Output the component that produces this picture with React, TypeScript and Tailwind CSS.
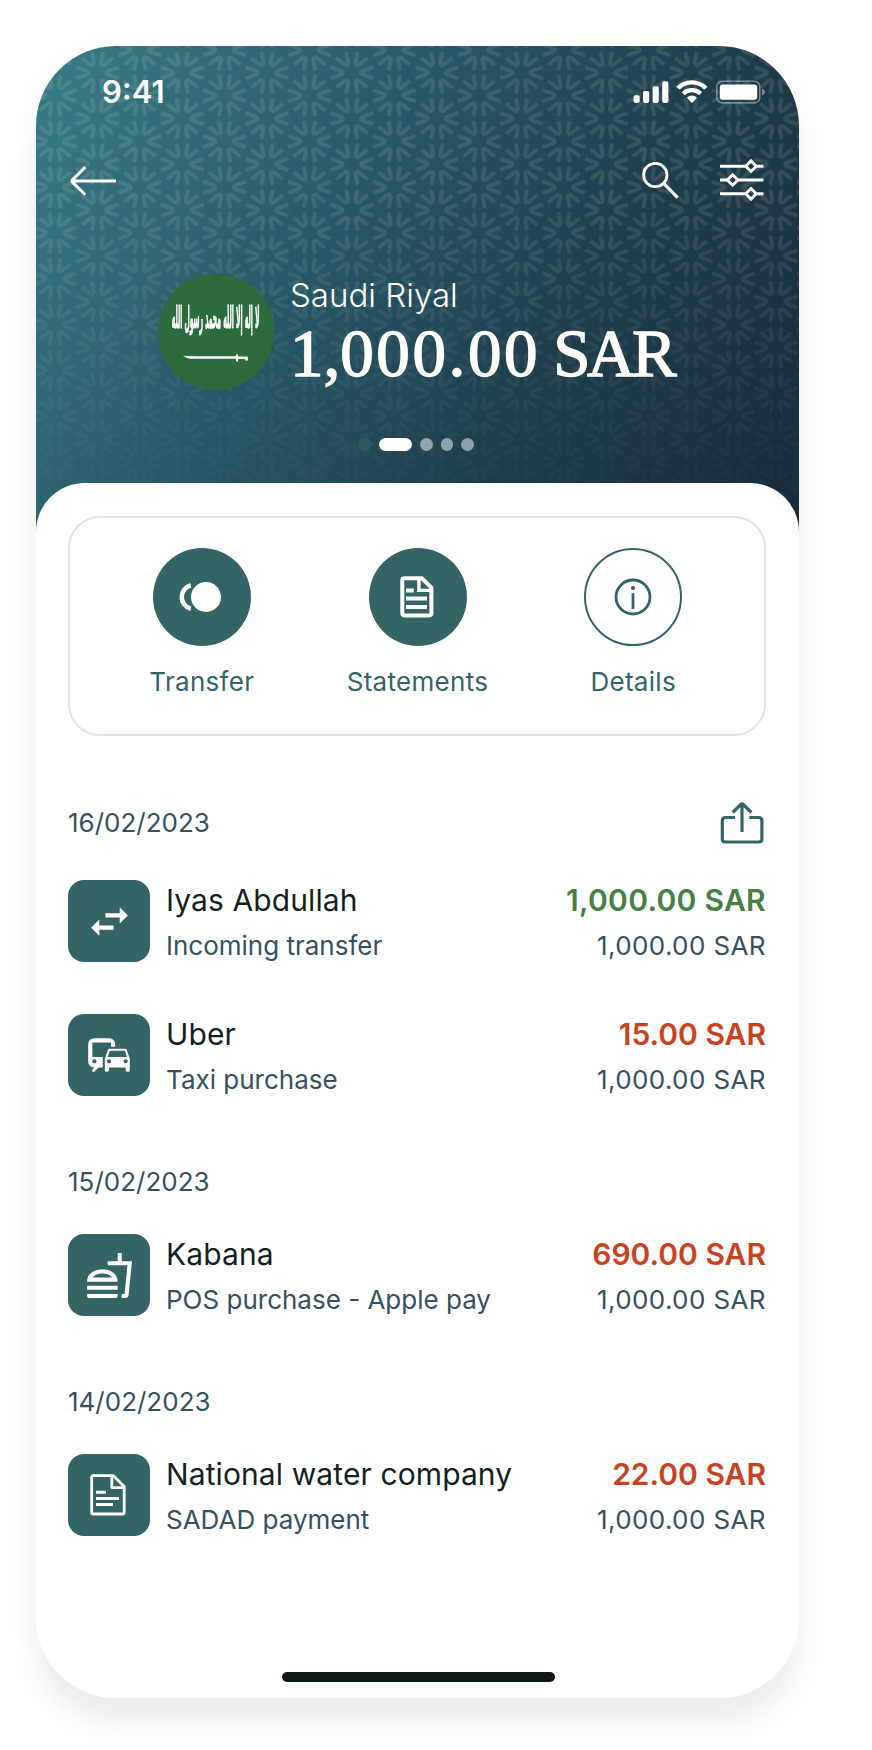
import type { ReactNode } from 'react';
import { MdCommute, MdOutlineFastfood, MdSwapHoriz } from 'react-icons/md';

const petalAngles = [0, 60, 120, 180, 240, 300];

function Flower({ x, y }: { x: number; y: number }) {
  return (
    <g transform={`translate(${x} ${y}) scale(1.04 1)`}>
      {petalAngles.map((angle) => (
        <path key={angle} d="M20.6 -5.6 L11 -2.2 Q6.6 0 11 2.2 L20.6 5.6" transform={`rotate(${angle})`} />
      ))}
    </g>
  );
}

function HeaderPattern() {
  return (
    <svg className="absolute inset-0 h-full w-full" aria-hidden="true">
      <defs>
        <pattern id="lattice" x="-23.4" y="-19" width="84.82" height="45.8" patternUnits="userSpaceOnUse">
          <g fill="none" stroke="#fff" strokeWidth="3.9">
            <Flower x={42.41} y={22.9} />
            <Flower x={42.41} y={-22.9} />
            <Flower x={42.41} y={68.7} />
            <Flower x={0} y={0} />
            <Flower x={84.82} y={0} />
            <Flower x={0} y={45.8} />
            <Flower x={84.82} y={45.8} />
          </g>
        </pattern>
        <linearGradient id="fade" x1="0" y1="0" x2="0" y2="1">
          <stop offset="0.3" stopColor="#fff" stopOpacity="0.11" />
          <stop offset="0.95" stopColor="#fff" stopOpacity="0.01" />
        </linearGradient>
        <mask id="fadeMask">
          <rect width="100%" height="100%" fill="url(#fade)" />
        </mask>
      </defs>
      <rect width="100%" height="100%" fill="url(#lattice)" mask="url(#fadeMask)" />
    </svg>
  );
}

function StatusIcons() {
  return (
    <svg width="134" height="26" viewBox="0 0 134 26" fill="#fff" aria-hidden="true">
      <rect x="1.5" y="16.3" width="6.2" height="7.6" rx="1.8" />
      <rect x="11" y="12" width="6.2" height="11.9" rx="1.8" />
      <rect x="20.6" y="7.3" width="6.2" height="16.6" rx="1.8" />
      <rect x="30.2" y="2.3" width="6.2" height="21.6" rx="1.8" />
      <g fill="none" stroke="#fff" strokeWidth="4.4">
        <path d="M46 9.2 A19.4 19.4 0 0 1 73.8 9.2" />
        <path d="M51.2 14.7 A12.4 12.4 0 0 1 68.6 14.7" />
      </g>
      <path d="M54.9 18.4 Q59.9 14.6 64.9 18.4 L60.8 23.2 Q59.9 24 59 23.2 Z" />
      <rect x="84.8" y="2.3" width="43" height="21.6" rx="5.5" fill="none" stroke="#fff" strokeOpacity="0.38" strokeWidth="1.6" />
      <rect x="87.8" y="5.4" width="37.4" height="15.4" rx="3" />
      <path d="M130 9.4 Q133 10.7 133 13 Q133 15.3 130 16.6 Z" fillOpacity="0.4" />
    </svg>
  );
}

function FilterLine({ y, x }: { y: number; x: number }) {
  return (
    <>
      <path d={`M0 ${y}H${x - 5.5}M${x + 5.5} ${y}H43.5`} />
      <path d={`M${x} ${y - 5.3}L${x + 5.3} ${y}L${x} ${y + 5.3}L${x - 5.3} ${y}Z`} />
    </>
  );
}

function DocumentIcon({ bold }: { bold?: boolean }) {
  return bold ? (
    <svg width="34" height="42" viewBox="0 0 34 42" fill="none" stroke="#fff" className="mr-[2px]" aria-hidden="true">
      <path strokeWidth="4" strokeLinejoin="round" d="M4.3 2.3H22L31.4 11.6V37.3Q31.4 39.4 29.3 39.4H4.3Q2.3 39.4 2.3 37.3V4.3Q2.3 2.3 4.3 2.3Z" />
      <path strokeWidth="3.4" d="M18.9 3V14.4H31" />
      <path strokeWidth="4" d="M6 14.6H13.8M6 22.6H27M6 30.9H27" />
    </svg>
  ) : (
    <svg width="36" height="42" viewBox="0 0 36 42" fill="none" stroke="#fff" strokeWidth="2.8" strokeLinejoin="round" className="mr-[2px]" aria-hidden="true">
      <path d="M3.4 1.7H23.4L34.2 12.5V38.2Q34.2 40 32.4 40H3.4Q1.7 40 1.7 38.2V3.4Q1.7 1.7 3.4 1.7Z" />
      <path d="M21.8 2V13.6H34" />
      <path strokeWidth="3" d="M6 18.3H16M6 24.6H29M6 30.6H23" />
    </svg>
  );
}

function Flag() {
  return (
    <div className="flex h-[116px] w-[116px] shrink-0 flex-col items-center rounded-full bg-[#2c6c3c] pt-[25px] text-white">
      <div className="flex h-[38px] w-[86px] items-center justify-center">
        <span dir="rtl" lang="ar" className="block scale-x-[0.235] scale-y-[1.15] font-['DejaVu_Sans',sans-serif] text-[26px] leading-[38px] font-bold whitespace-nowrap [-webkit-text-stroke:0.8px_#fff]">
          لا إله إلا الله محمد رسول الله
        </span>
      </div>
      <svg width="66" height="8" viewBox="0 0 66 8" className="mt-[17px]" fill="#fff" aria-hidden="true">
        <path d="M0 1.6 Q5 2.6 53 2.3 V0.4 H55 V2.4 H63 Q65 2 65 4 V6 Q64 7.2 62 6.2 V5 H55 V7.4 H53 V4.8 H7 Q2.5 4 0 1.6Z" />
      </svg>
    </div>
  );
}

function Action({ label, outlined, children }: { label: string; outlined?: boolean; children: ReactNode }) {
  return (
    <button className="flex flex-1 flex-col items-center">
      <span
        className={
          outlined
            ? 'flex h-[98px] w-[98px] items-center justify-center rounded-full border-2 border-[#356467]'
            : 'flex h-[98px] w-[98px] items-center justify-center rounded-full bg-[#356467]'
        }
      >
        {children}
      </span>
      <span className="mt-[18px] text-[26px] leading-9 font-[370] tracking-[0.3px] text-[#356467]">{label}</span>
    </button>
  );
}

type Entry = { title: string; detail: string; amount: string; incoming?: boolean; icon: ReactNode };

function EntryRow({ title, detail, amount, incoming, icon }: Entry) {
  return (
    <li className="flex h-[82px] items-center">
      <div className="flex h-[82px] w-[82px] shrink-0 items-center justify-center rounded-2xl bg-[#356467] text-white">{icon}</div>
      <div className="ml-4 flex flex-1 flex-col pt-1">
        <span className="text-[30px] leading-[46px] font-[370] tracking-[0.1px] text-[#131f23]">{title}</span>
        <span className="text-[26px] leading-[46px] font-[370] text-[#35515f]">{detail}</span>
      </div>
      <div className="flex flex-col items-end pt-1">
        <span
          className={
            incoming
              ? 'text-[30px] leading-[46px] font-semibold tracking-[0.3px] text-[#44803f]'
              : 'text-[30px] leading-[46px] font-semibold text-[#c9421f]'
          }
        >
          {amount}
        </span>
        <span className="text-[26px] leading-[46px] font-[370] tracking-[0.4px] text-[#35515f]">1,000.00 SAR</span>
      </div>
    </li>
  );
}

export default function App() {
  return (
    <div className="h-[1750px] w-[872px] overflow-hidden bg-white pt-[46px] pl-9 font-['Inter',sans-serif]">
      <main className="h-[1652px] w-[763px] overflow-hidden rounded-[80px] bg-white shadow-[0_24px_30px_rgba(20,50,45,0.09)]">
        <header className="relative h-[486px] bg-[linear-gradient(121deg,#387c83_0%,#285866_38%,#1f3d4b_66%,#162b3a_100%)] text-white">
          <HeaderPattern />
          <div className="relative flex h-[92px] items-center justify-between pr-[33px] pl-[66px]">
            <span className="pt-px text-[31px] font-[570]">9:41</span>
            <StatusIcons />
          </div>
          <div className="relative flex h-[86px] items-center justify-between pr-[35px] pl-[33px]">
            <svg width="48" height="32" viewBox="0 0 48 32" fill="none" stroke="#fff" strokeWidth="3" aria-hidden="true">
              <path d="M47 16H3M16.3 2.2L3.6 14.6Q2.2 16 3.6 17.4L16.3 29.8" />
            </svg>
            <div className="flex items-center gap-10">
              <svg width="38" height="38" viewBox="0 0 38 38" fill="none" stroke="#fff" strokeWidth="2.8" aria-hidden="true">
                <circle cx="13.3" cy="13" r="11.7" />
                <path strokeWidth="3.2" d="M22 21.7L35.6 35.6" />
              </svg>
              <svg width="44" height="44" viewBox="0 0 44 44" fill="none" stroke="#fff" strokeWidth="2.9" className="mb-[2px]" aria-hidden="true">
                <FilterLine y={8.2} x={31} />
                <FilterLine y={22} x={12.6} />
                <FilterLine y={35.8} x={31} />
              </svg>
            </div>
          </div>
          <div className="relative mt-[50px] flex h-[116px] gap-4 pl-[122px]">
            <Flag />
            <div>
              <p className="text-[33px] leading-[42px] font-light">Saudi Riyal</p>
              <p className="text-[67px] leading-[74px] whitespace-nowrap [-webkit-text-stroke:1.4px_#fff] font-['Liberation_Serif',serif]">
                <span>1,</span>
                <span className="tracking-[2.6px]">000.00</span>
                <span className="tracking-[-3.5px]"> SAR</span>
              </p>
            </div>
          </div>
          <div className="relative mt-[48px] flex justify-center gap-2 pr-[3px]">
            <i className="h-[12.5px] w-[12.5px] rounded-full bg-[#2d5b61]" />
            <i className="h-[12.5px] w-[33px] rounded-full bg-white" />
            <i className="h-[12.5px] w-[12.5px] rounded-full bg-white/50" />
            <i className="h-[12.5px] w-[12.5px] rounded-full bg-white/50" />
            <i className="h-[12.5px] w-[12.5px] rounded-full bg-white/50" />
          </div>
        </header>

        <section className="relative -mt-[49px] h-[1215px] rounded-t-[49px] bg-white pt-[33px] pr-[33px] pl-8">
          <div className="flex h-[220px] rounded-[32px] border-2 border-[#dce6e8] pt-[30px] pr-[23px] pl-[24px]">
            <Action label="Transfer">
              <svg width="44" height="32" viewBox="0 0 44 32" className="mr-[3px]" aria-hidden="true">
                <circle cx="28" cy="16" r="15" fill="#fff" />
                <path d="M12.8 4.2A12.2 12.2 0 0 0 12.8 27.8" fill="none" stroke="#fff" strokeWidth="4.6" />
              </svg>
            </Action>
            <Action label="Statements">
              <DocumentIcon bold />
            </Action>
            <Action label="Details" outlined>
              <svg width="38" height="38" viewBox="0 0 38 38" fill="none" stroke="#356467" strokeWidth="2.8" aria-hidden="true">
                <circle cx="19" cy="19" r="17" />
                <path d="M19 15.2V31" />
                <circle cx="19" cy="10" r="2.1" fill="#356467" stroke="none" />
              </svg>
            </Action>
          </div>

          <div className="mt-[64px] flex h-11 items-center justify-between pr-[2px]">
            <h2 className="text-[26px] font-[370] text-[#35515f]">16/02/2023</h2>
            <svg width="44" height="44" viewBox="0 0 44 44" fill="none" stroke="#356467" strokeWidth="3.2" aria-hidden="true">
              <path d="M15 17.5H5.5Q2.3 17.5 2.3 20.7V39.3Q2.3 42 5.5 42H38.7Q41.9 42 41.9 39.3V20.7Q41.9 17.5 38.7 17.5H29.3" />
              <path d="M22 32V4.5M12.6 12.5L20.8 4.5Q22 3.4 23.2 4.5L31.4 12.5" />
            </svg>
          </div>
          <ul className="mt-9 flex flex-col gap-[52px]">
            <EntryRow title="Iyas Abdullah" detail="Incoming transfer" amount="1,000.00 SAR" incoming icon={<MdSwapHoriz size={49} />} />
            <EntryRow title="Uber" detail="Taxi purchase" amount="15.00 SAR" icon={<MdCommute size={50} />} />
          </ul>
          <h2 className="mt-[64px] text-[26px] leading-[44px] font-[370] text-[#35515f]">15/02/2023</h2>
          <ul className="mt-[30px]">
            <EntryRow title="Kabana" detail="POS purchase - Apple pay" amount="690.00 SAR" icon={<MdOutlineFastfood size={49} />} />
          </ul>
          <h2 className="mt-[64px] text-[26px] leading-[44px] font-[370] text-[#35515f]">14/02/2023</h2>
          <ul className="mt-[30px]">
            <EntryRow title="National water company" detail="SADAD payment" amount="22.00 SAR" icon={<DocumentIcon />} />
          </ul>
          <div className="mx-auto mt-[136px] h-[10px] w-[273px] translate-x-[1px] rounded-full bg-[#0e181b]" />
        </section>
      </main>
    </div>
  );
}
